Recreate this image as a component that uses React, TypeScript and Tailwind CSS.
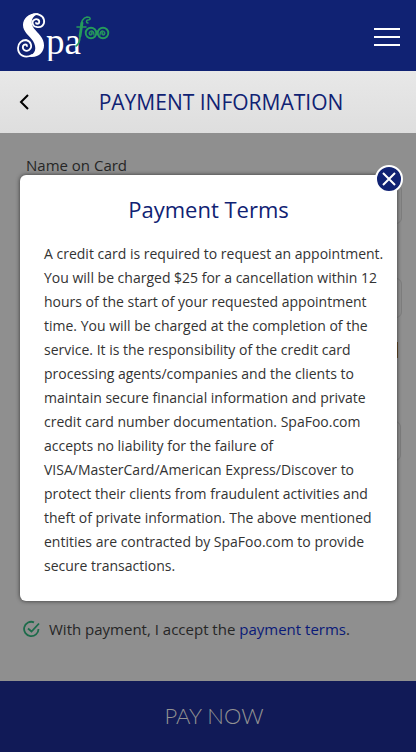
import React, { useState } from "react";

function Logo() {
  return (
    <svg viewBox="0 0 94 50" className="h-[50px] w-[94px]" role="img" aria-label="SpaFoo">
      <g fill="none" stroke="#fff" strokeLinecap="round" strokeLinejoin="round">
        <path
          strokeWidth="1.8"
          d="M16 4C21 2 27 4 28 9c1 5-3 8-7 7-4 0-6-5-3-7 3-2 6 0 5 3-1 1-3 1-3 0"
        />
        <path
          strokeWidth="1.8"
          d="M16 44C9 48 2 44 2 37c0-5 4-8 8-8 5 1 7 7 3 10-3 2-7 0-6-4 1-2 4-2 4 0"
        />
      </g>
      <path
        fill="#fff"
        d="M23 2.500C14 1 7 7 7 14c0 7 6 10 10 16 4 7 3 13-5 15.500 10 2 16-4 16-11 0-8-6-12-10-17-4-6-3-12 5-15Z"
      />
      <text x="30" y="43" fill="#fff" className="font-['Liberation_Serif',serif] text-[37px]">
        pa
      </text>
      <g fill="none" stroke="#259b5b" strokeLinecap="round">
        <path strokeWidth="1.500" d="M72 12c-2 0-2-3 0-3 3 0 3-3-1-3-4 1-6 5-6 10" />
        <path strokeWidth="2.800" d="M66 12l-2 13" />
        <path strokeWidth="1.600" d="M64 25c0 4-1 8-4 10M61 16h9" />
        <circle cx="75" cy="22" r="5.300" strokeWidth="1.900" />
        <path strokeWidth="1.300" d="M75 22c1-1 2 1 0 2-2 0-3-3 0-4 2 0 3 2 3 4" />
        <circle cx="87" cy="22" r="5.300" strokeWidth="1.900" />
        <path strokeWidth="1.300" d="M87 22c-1-1-2 1 0 2 2 0 3-3 0-4-2 0-3 2-3 4" />
      </g>
    </svg>
  );
}

function Field({ label, type = "text" }: { label: string; type?: string }) {
  return (
    <input
      type={type}
      aria-label={label}
      className="h-10 w-full rounded-md border border-[#7e7e7e] bg-transparent px-3"
    />
  );
}

export default function App() {
  const [open, setOpen] = useState(true);
  const [accepted, setAccepted] = useState(true);

  return (
    <div className="flex min-h-screen flex-col bg-[#8f8f8f] font-['Open_Sans',sans-serif] text-[#262626]">
      <header className="flex h-[71px] items-center justify-between bg-[#102273] px-4">
        <a href="#home">
          <Logo />
        </a>
        <button type="button" aria-label="Menu" className="flex w-[26px] flex-col gap-[6px] pt-[3px]">
          <span className="h-[2px] w-full bg-white" />
          <span className="h-[2px] w-full bg-white" />
          <span className="h-[2px] w-full bg-white" />
        </button>
      </header>

      <div className="flex h-[62px] items-center bg-linear-to-b from-[#e8e8e8] to-[#dedede] px-4">
        <button type="button" aria-label="Back" className="w-4 text-black">
          <svg viewBox="0 0 16 16" className="size-4" fill="none" stroke="currentColor" strokeWidth="2">
            <path d="M12 1 5 8l7 7" />
          </svg>
        </button>
        <h1 className="flex-1 pl-[10px] text-center text-[21px] leading-7 text-[#102273]">
          PAYMENT INFORMATION
        </h1>
      </div>

      <main className="relative flex flex-1 flex-col pt-5 pr-[14px] pb-9 pl-[26px]">
        <label htmlFor="card-name" className="text-[15px] leading-6">
          Name on Card
        </label>
        <input
          id="card-name"
          className="mt-[7px] h-10 w-full rounded-md border border-[#7e7e7e] bg-transparent px-3"
        />
        <div className="mt-[54px]">
          <Field label="Card Number" />
        </div>
        <div className="mt-6 mr-1 h-4 w-6 self-end bg-[#5a3a10]" />
        <div className="mt-[63px] pr-px">
          <Field label="Security Code" type="password" />
        </div>

        <div className="mt-auto -ml-[3px] flex items-center gap-2 text-[15px] leading-8">
          <span className="relative size-[18px]">
            <input
              id="accept"
              type="checkbox"
              checked={accepted}
              onChange={(e) => setAccepted(e.target.checked)}
              className="block size-[18px] appearance-none rounded-full"
            />
            <svg
              viewBox="0 0 18 18"
              className="pointer-events-none absolute inset-0 size-[18px]"
              fill="none"
              stroke="#1c6b4a"
              strokeWidth="1.8"
            >
              <path d="M15.500 9A7.200 7.200 0 1 1 11 2.300" />
              {accepted && <path d="M5 8.500l3.500 3 7.500-8" />}
            </svg>
          </span>
          <p>
            <label htmlFor="accept">With payment, I accept the </label>
            <a
              href="#terms"
              className="text-[#0a1a78]"
              onClick={(e) => {
                e.preventDefault();
                setOpen(true);
              }}
            >
              payment terms
            </a>
            .
          </p>
        </div>

        {open && (
          <section
            role="dialog"
            aria-labelledby="terms-title"
            className="absolute top-[42px] right-[19px] left-5 rounded-md bg-white px-6 pt-5 pb-[23px] shadow-[0_0_4px_0_#333333]"
          >
            <h2 id="terms-title" className="text-center text-[22px] leading-7 text-[#102273]">
              Payment Terms
            </h2>
            <p className="mt-[19px] -mr-3 text-[14px] leading-6 text-[#333333]">
              A credit card is required to request an appointment. You will be charged $25 for a
              cancellation within 12 hours of the start of your requested appointment time. You will
              be charged at the completion of the service. It is the responsibility of the credit
              card processing agents/companies and the clients to maintain secure financial
              information and private credit card number documentation. SpaFoo.com accepts no
              liability for the failure of VISA/MasterCard/American Express/Discover to protect their
              clients from fraudulent activities and theft of private information. The above
              mentioned entities are contracted by SpaFoo.com to provide secure transactions.
            </p>
            <button
              type="button"
              aria-label="Close"
              onClick={() => setOpen(false)}
              className="absolute -top-[10px] -right-[6px] flex size-7 items-center justify-center rounded-full border-2 border-white bg-[#102273] text-white"
            >
              <svg viewBox="0 0 16 16" className="size-4" fill="none" stroke="currentColor" strokeWidth="2">
                <path d="M2 2l12 12M14 2 2 14" />
              </svg>
            </button>
          </section>
        )}
      </main>

      <button
        type="button"
        className="h-[71px] w-full bg-[#111a57] pb-[2px] pl-3 font-['Lato',sans-serif] text-[22px] font-light text-[#929292]"
      >
        PAY NOW
      </button>
    </div>
  );
}
